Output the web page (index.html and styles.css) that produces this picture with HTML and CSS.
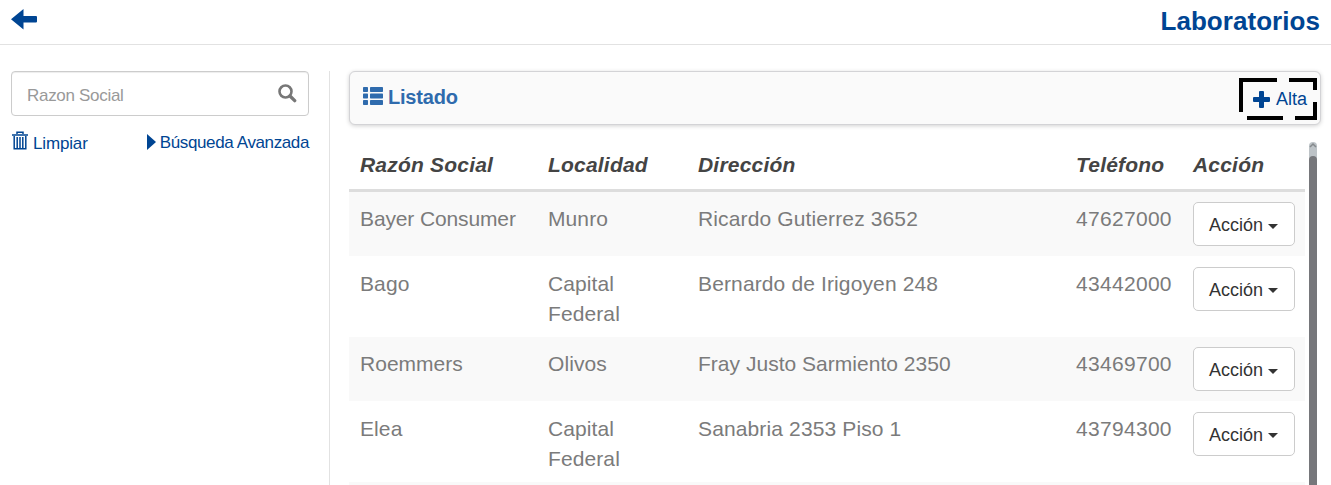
FILE: index.html
```html
<!DOCTYPE html>
<html lang="es">
<head>
<meta charset="utf-8">
<title>Laboratorios</title>
<link rel="stylesheet" href="styles.css">
</head>
<body>
<header class="topbar">
  <a class="back"><svg width="26" height="21" viewBox="0 0 26 21"><path d="M0 10.200 12.500 0V7H25q1 0 1 1v4.500q0 1-1 1H12.500V20.500Z"/></svg></a>
  <h1 class="title">Laboratorios</h1>
</header>
<div class="layout">
  <aside class="sidebar">
    <div class="search">
      <span class="placeholder">Razon Social</span>
      <svg class="search-icon" width="19" height="19" viewBox="0 0 19 19"><circle cx="7.500" cy="7.500" r="6" fill="none" stroke="#777" stroke-width="2.600"/><path d="m12 12 4.700 4.700" stroke="#777" stroke-width="3.300" stroke-linecap="round"/></svg>
    </div>
    <div class="actions">
      <a class="clear"><svg width="16" height="19" viewBox="0 0 16 19"><path d="M5 3V1.200h6V3M0 4h16M2.200 5v12.800h11.600V5M5.200 6v11M8 6v11M10.800 6v11" fill="none" stroke="#004593" stroke-width="1.500"/></svg><span>Limpiar</span></a>
      <a class="advanced"><svg width="9" height="16" viewBox="0 0 9 16"><path d="M0 0 9 8 0 16Z"/></svg><span>Búsqueda Avanzada</span></a>
    </div>
  </aside>
  <main class="content">
    <div class="panel">
      <h2 class="panel-title"><svg width="20" height="18" viewBox="0 0 20 18"><rect width="5" height="5" rx=".7"/><rect x="7" width="13" height="5" rx=".7"/><rect y="6.500" width="5" height="5" rx=".7"/><rect x="7" y="6.500" width="13" height="5" rx=".7"/><rect y="13" width="5" height="5" rx=".7"/><rect x="7" y="13" width="13" height="5" rx=".7"/></svg><span>Listado</span></h2>
      <a class="add">
        <svg class="dashes" width="78" height="42" viewBox="0 0 78 42"><path d="M0 0h38v4H4v30H0ZM50 0h28v12h-4V4H50ZM8 38h36v4H8ZM74 24h4v18H56v-4h18Z"/></svg>
        <svg class="plus" width="17" height="17" viewBox="0 0 17 17"><path d="M6 1q0-1 1-1h3q1 0 1 1v5h5q1 0 1 1v3q0 1-1 1h-5v5q0 1-1 1H7q-1 0-1-1v-5H1q-1 0-1-1V7q0-1 1-1h5Z"/></svg><span>Alta</span>
      </a>
    </div>
    <div class="scroller">
      <table class="grid">
        <colgroup><col class="c-name"><col class="c-city"><col class="c-addr"><col class="c-tel"><col class="c-act"></colgroup>
        <thead><tr><th>Razón Social</th><th>Localidad</th><th>Dirección</th><th>Teléfono</th><th>Acción</th></tr></thead>
        <tbody>
          <tr><td class="name">Bayer Consumer</td><td>Munro</td><td>Ricardo Gutierrez 3652</td><td>47627000</td><td class="act"><button class="btn">Acción<i class="caret"></i></button></td></tr>
          <tr><td>Bago</td><td>Capital Federal</td><td>Bernardo de Irigoyen 248</td><td>43442000</td><td class="act"><button class="btn">Acción<i class="caret"></i></button></td></tr>
          <tr><td class="tight">Roemmers</td><td>Olivos</td><td class="tight">Fray Justo Sarmiento 2350</td><td>43469700</td><td class="act"><button class="btn">Acción<i class="caret"></i></button></td></tr>
          <tr><td>Elea</td><td>Capital Federal</td><td>Sanabria 2353 Piso 1</td><td>43794300</td><td class="act"><button class="btn">Acción<i class="caret"></i></button></td></tr>
          <tr><td></td><td></td><td></td><td></td><td></td></tr>
        </tbody>
      </table>
      <div class="scrollbar"><svg width="8" height="14" viewBox="0 0 8 14"><path d="M1 5 4 2l3 3" fill="none" stroke="#85898c" stroke-width="1.500"/></svg><div class="thumb"></div></div>
    </div>
  </main>
</div>
</body>
</html>
```
FILE: styles.css
```css
* { box-sizing: border-box; }
body { margin: 0; height: 485px; overflow: hidden; background: #fff; color: #7b7b7b; font: 17px/24px "Liberation Sans", Arial, sans-serif; }
svg { display: block; flex: none; }
a, .title { color: #004593; fill: #004593; }

.topbar { display: flex; justify-content: space-between; height: 45px; padding: 0 11px; border-bottom: 1px solid #e2e2e2; }
.back { padding-top: 9px; }
.title { margin: 0; padding-top: 6px; font-size: 26px; line-height: 30px; font-weight: bold; letter-spacing: .05px; }

.layout { display: flex; height: 440px; padding: 26px 10px 0 11px; }
.sidebar { width: 319px; padding-right: 20px; border-right: 1px solid #e2e2e2; }
.search { display: flex; justify-content: space-between; height: 45px; padding: 12px 11px 0 15px; border: 1px solid #ccc; border-radius: 4px; box-shadow: inset 0 1px 1px rgba(0, 0, 0, .075); }
.placeholder { color: #999; letter-spacing: -.3px; }
.actions { display: flex; justify-content: space-between; padding-top: 15px; }
.clear, .advanced { display: flex; }
.clear { gap: 5px; padding-left: 1px; letter-spacing: -.15px; }
.clear span { padding-top: 1px; }
.advanced { gap: 4px; letter-spacing: -.38px; }
.advanced svg { margin-top: 3px; }

.content { flex: 1; padding-left: 19px; }
.panel { display: flex; justify-content: space-between; height: 54px; padding: 0 3px 0 13px; background: #fafafa; border: 1px solid #d3d3d6; border-radius: 6px; box-shadow: 0 1px 4px rgba(0, 0, 0, .18); }
.panel-title { display: flex; gap: 5px; margin: 0; padding-top: 12px; font-size: 20px; line-height: 26px; letter-spacing: -.2px; color: #2f6bad; fill: #2f6bad; }
.panel-title svg { margin-top: 3px; }
.add { position: relative; display: flex; gap: 6px; width: 78px; height: 42px; margin-top: 6px; padding: 9px 0 0 14px; font-size: 18px; }
.plus { margin-top: 4px; }
.dashes { position: absolute; inset: 0; fill: #000; }

.scroller { display: flex; justify-content: space-between; height: 360px; padding: 17px 4px 0 0; overflow: hidden; }
.grid { width: 956px; height: max-content; table-layout: fixed; border-collapse: separate; border-spacing: 0; font-size: 21px; line-height: 30px; letter-spacing: .1px; }
.c-name { width: 188px; }
.c-city { width: 150px; }
.c-addr { width: 378px; }
.c-tel { width: 117px; }
.c-act { width: 123px; }
th { height: 50px; padding: 0 0 1px 11px; border-bottom: 3px solid #ddd; text-align: left; vertical-align: middle; font-style: italic; color: #444; letter-spacing: .2px; white-space: nowrap; }
td { height: 64px; padding: 12px 30px 0 11px; vertical-align: top; }
td:nth-child(3), td:nth-child(4) { padding-right: 0; white-space: nowrap; }
td:nth-child(3) { letter-spacing: .13px; }
td:nth-child(4) { letter-spacing: .3px; }
td.name { padding-right: 0; letter-spacing: -.13px; }
td.tight { letter-spacing: .02px; }
tbody tr:nth-child(odd) { background: #f9f9f9; }
tbody tr:nth-child(even) td { height: 81px; padding-top: 13px; }
tbody td.act { padding: 10px 0 0 11px; }
tbody tr:nth-child(even) td.act { padding-top: 11px; }
.btn { display: flex; align-items: center; gap: 5px; width: 102px; height: 44px; padding: 2px 0 0 15px; background: #fff; border: 1px solid #ccc; border-radius: 5px; color: #333; font: 18px/26px "Liberation Sans", Arial, sans-serif; }
tr:nth-child(even) .btn { padding-top: 1px; }
.caret { margin-top: 2px; border: 5px solid transparent; border-top-color: #333; border-bottom: 0; }

.scrollbar { width: 8px; height: 343px; background: #bdc3c7; border-radius: 4px 4px 0 0; }
.thumb { height: 329px; background: #76777b; border-radius: 4px 4px 0 0; }
```
